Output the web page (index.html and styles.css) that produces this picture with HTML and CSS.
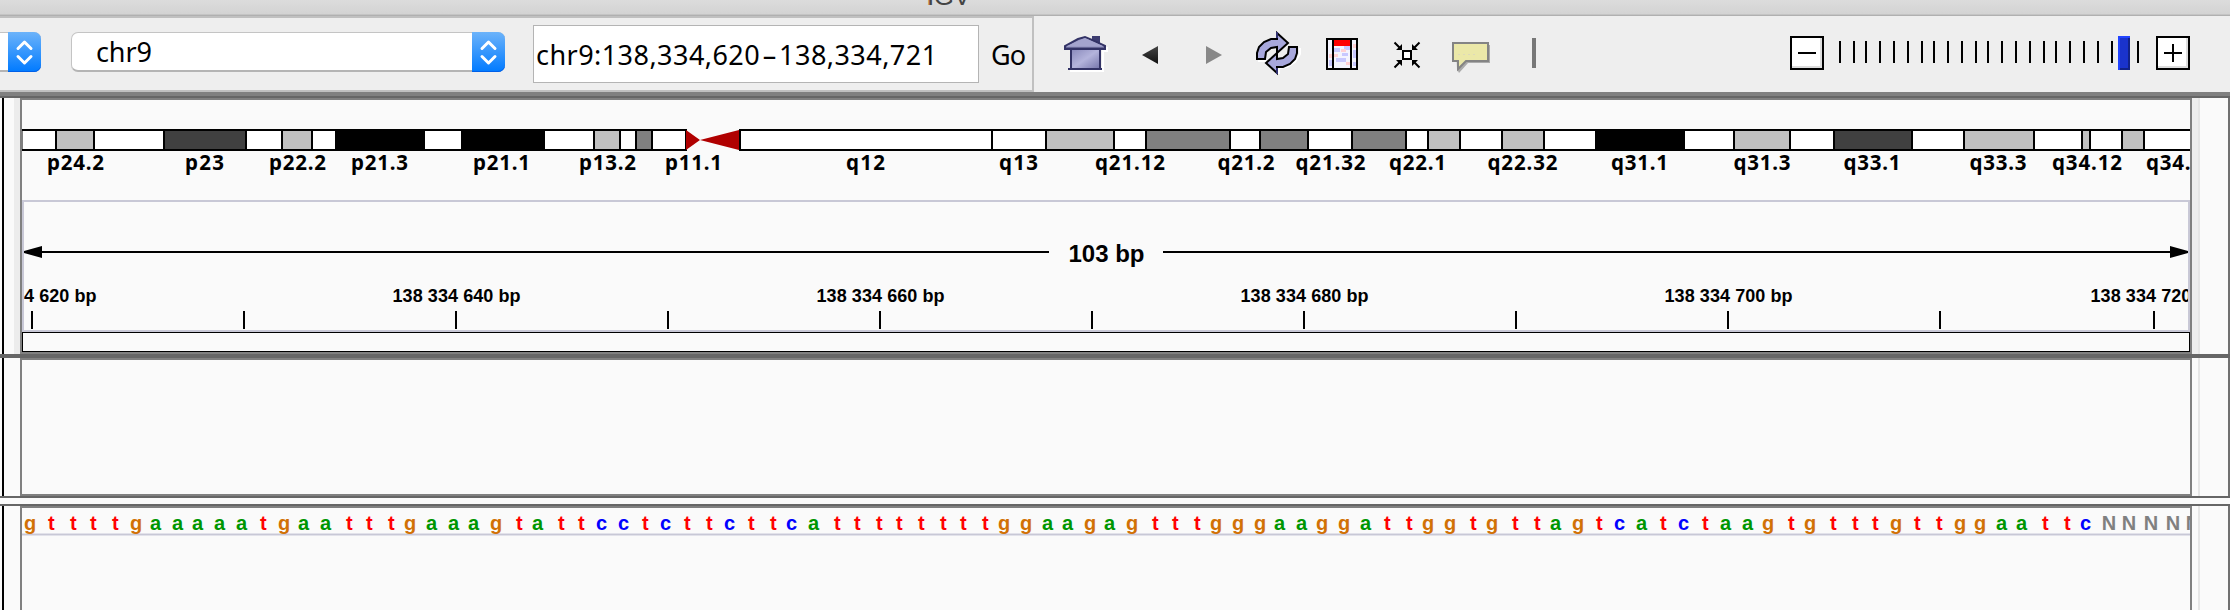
FILE: index.html
```html
<!DOCTYPE html>
<html lang="en">
<head>
<meta charset="utf-8">
<title>IGV</title>
<link rel="stylesheet" href="styles.css">
</head>
<body>
<div class="window">
  <header class="titlebar"><span class="title"><span class="title-initial">I</span>GV</span></header>
  <div class="toolbar">
    <div class="location">
      <div class="combo combo-genome"><span class="stepper"><svg width="33" height="40" viewBox="0 0 33 40"><path d="M10 16.5l6.500-6.500 6.500 6.500M10 24.500l6.500 6.500 6.500-6.500"/></svg></span></div>
      <div class="combo combo-chrom"><span class="combo-text">chr9</span><span class="stepper"><svg width="33" height="40" viewBox="0 0 33 40"><path d="M10 16.5l6.500-6.500 6.500 6.500M10 24.500l6.500 6.500 6.500-6.500"/></svg></span></div>
      <div class="locus"><span class="locus-text">chr9:138,334,620<span class="dash">–</span>138,334,721</span></div>
      <span class="go">Go</span>
    </div>
    <svg class="icons" width="520" height="76" viewBox="1034 16 520 76">
      <defs>
        <linearGradient id="wall" x1="0" y1="0" x2="1" y2="1"><stop offset="0" stop-color="#8888ba"/><stop offset=".5" stop-color="#b4b4dc"/><stop offset="1" stop-color="#7474aa"/></linearGradient>
        <linearGradient id="back" x1="0" y1="0" x2="0" y2="1"><stop offset="0" stop-color="#444"/><stop offset="1" stop-color="#111"/></linearGradient>
      </defs>
      <g>
        <path d="M1070 71h33v-20h4v-4" fill="none" stroke="#fff" stroke-width="2"/>
        <path d="M1092 36h8v9h-8z" fill="#3c3c70"/>
        <path d="M1071 49h29v20h-29z" fill="url(#wall)" stroke="#333366" stroke-width="2"/>
        <path d="M1068 69h34" stroke="#333366" stroke-width="2"/>
        <path d="M1065 49v-3l13-7 7-2 7 3 13 6v3z" fill="#9a9ac6" stroke="#333366" stroke-width="2"/>
        <path d="M1067 46l18-8 18 8z" fill="#a4a4ce"/>
        <path d="M1065 48.500h40" stroke="#333366" stroke-width="2"/>
      </g>
      <path d="M1142 55l16-9v18z" fill="url(#back)"/>
      <path d="M1222 55l-16-9v18z" fill="#888"/>
      <g stroke-width="2" fill="#a8a8dc">
        <path d="M1266 61h-8M1279 74v-6l8-1 8-5 5-8v-6" fill="none" stroke="#fff"/>
        <path d="M1257 59V53l2-6 5-5 7-3h6v-6l11 10-11 10v-6l-6 1-5 4-1 7z" stroke="#000"/>
        <path d="M1297 47v6l-2 6-5 5-7 3h-6v6l-11-10 11-10v6l6-1 5-4 1-7z" stroke="#000"/>
        <path d="M1277 32v6M1277 68v6" stroke="#303070" fill="none"/>
      </g>
      <g>
        <path d="M1327 39h30v30h-30z" fill="#f4f4ff"/>
        <path d="M1334 48h6v4h-6zM1344 46h6v4h-6zM1336 58h10v4h-10zM1353 50h3v8h-3zM1329 60h3v6h-3zM1342 53h6v3h-6zM1353 62h3v4h-3z" fill="#c8c8ff"/>
        <path d="M1334 54h4v3h-4zM1341 49h5v3h-5zM1329 54h3v4h-3zM1353 44h3v4h-3zM1346 62h4v3h-4z" fill="#ffd0d4"/>
        <path d="M1334 40h16v6h-16z" fill="#f00"/>
        <path d="M1327 39h30v30h-30zM1333 39v30M1351 39v30" fill="none" stroke="#000" stroke-width="2"/>
      </g>
      <g>
        <path d="M1403 51h8v8h-8z" fill="#fff" stroke="#000" stroke-width="2"/>
        <path d="M1394.500 42.500l6 6M1419.500 42.500l-6 6M1394.500 67.500l6-6M1419.500 67.500l-6-6" stroke="#000" stroke-width="2"/>
        <path d="M1402 50v-6l-6 6zM1412 50v-6l6 6zM1402 60v6l-6-6zM1412 60v6l6-6z"/>
      </g>
      <g>
        <path d="M1456 45h34v18h-22l-9 10-2-4z" fill="#aaa"/>
        <path d="M1453 43h35v18h-22l-8 8v-8h-5z" fill="#ebe8a8" stroke="#848484" stroke-width="2"/>
        <path d="M1458 54.500h20" stroke="#ddd9bb" stroke-dasharray="2 3"/>
      </g>
      <path d="M1532 38h4v30h-4z" fill="#777"/>
    </svg>
    <div class="zoom">
      <button class="zoom-btn" aria-label="Zoom out"><svg width="30" height="30"><path d="M6 15h18"/></svg></button>
      <svg class="slider" id="slider" width="332" height="34" viewBox="1824 36 332 34"></svg>
      <button class="zoom-btn" aria-label="Zoom in"><svg width="30" height="30"><path d="M6 15h18M15 6v18"/></svg></button>
    </div>
  </div>
  <main class="panels">
    <section class="row row-header">
      <div class="name-col"></div>
      <div class="view">
        <svg class="ideogram" id="ideogram" width="2168" height="100" viewBox="22 100 2168 100"></svg>
        <div class="ruler"><svg id="ruler" width="2164" height="128" viewBox="24 202 2164 128"></svg></div>
        <div class="overview"></div>
      </div>
      <div class="scroll-col"></div>
    </section>
    <section class="row row-data">
      <div class="name-col"></div><div class="view"></div><div class="scroll-col"></div>
    </section>
    <div class="divider"></div>
    <section class="row row-sequence">
      <div class="name-col"></div>
      <div class="view"><svg id="sequence" width="2168" height="102" viewBox="22 508 2168 102"></svg></div>
      <div class="scroll-col"></div>
    </section>
  </main>
</div>
<script src="main.js"></script>
</body>
</html>
```
FILE: styles.css
```css
* { box-sizing: border-box; }
body { margin: 0; background: #fafafa; font-family: "Noto Sans", "Open Sans", sans-serif; color: #000; overflow: hidden; }
svg { display: block; flex: none; }
.window { width: 2230px; height: 610px; display: flex; flex-direction: column; overflow: hidden; }
.titlebar { height: 16px; flex: none; overflow: hidden; background: linear-gradient(#dcdcdc, #d3d3d3 14px, #c4c4c4 14px, #c4c4c4 15px, #b0b0b0 15px); padding-left: 927px; }
.title { display: block; margin-top: -19px; font: 26px/30px "Liberation Sans", Arial, sans-serif; color: #444; letter-spacing: -.5px; }
.title-initial { text-shadow: -1px 0 #d08a50; }
.toolbar { height: 82px; flex: none; display: flex; background: linear-gradient(#eee 76px, #808080 76px, #808080 80px, #666 80px); }
.location { width: 1034px; height: 76px; flex: none; display: flex; align-items: flex-start; border: 2px solid #c0c0c0; border-left: 0; }
.combo { height: 40px; margin-top: 14px; display: flex; justify-content: space-between; background: #fff; border: 1px solid #c4c4c4; border-bottom: 2px solid #b4b4b4; border-radius: 7px; flex: none; }
.combo-genome { width: 41px; border-left: 0; border-top-left-radius: 0; border-bottom-left-radius: 0; justify-content: flex-end; }
.combo-chrom { width: 434px; margin-left: 30px; }
.combo-text { font-size: 27px; line-height: 38px; padding-left: 24px; letter-spacing: -.1px; }
.stepper { width: 33px; height: 40px; margin: -1px -1px 0 0; border-radius: 0 7px 7px 0; background: linear-gradient(#6cb3fa, #007aff); box-shadow: inset 0 -1px #0060e8; }
.stepper path { fill: none; stroke: #fff; stroke-width: 3; stroke-linecap: round; stroke-linejoin: round; }
.locus { width: 446px; height: 58px; margin: 7px 0 0 28px; background: #fff; border: 1px solid #b4b4b4; flex: none; }
.locus-text { display: block; padding-left: 2px; font-size: 27px; line-height: 58px; letter-spacing: .45px; white-space: nowrap; }
.dash { padding: 0 2.5px; }
.go { margin: 7px 0 0 12px; font-size: 27px; line-height: 60px; letter-spacing: -1px; }
.zoom { display: flex; margin: 20px 0 0 236px; }
.zoom-btn { width: 34px; height: 34px; padding: 0; border: 2px solid #000; background: #fff; box-shadow: inset -2px -2px #ddd; }
.zoom-btn path { stroke: #000; stroke-width: 2; }
.panels { flex: 1; display: flex; flex-direction: column; background: #fafafa; }
.row { display: flex; flex: none; }
.name-col { flex: none; border-left: 2px solid #000; margin-left: 2px; width: 18px; }
.view { width: 2172px; flex: none; border: 2px solid #808080; overflow: hidden; }
.scroll-col { flex: 1; border-right: 2px solid #707070; background: linear-gradient(90deg, #fafafa 6px, #e6e6e6 6px, #e6e6e6 8px, #fafafa 8px); }
.row-header { height: 260px; border-bottom: 4px solid #666; }
.row-header .name-col { background: linear-gradient(90deg, #fafafa 10px, #ececec 10px); }
.row-header .scroll-col { background: linear-gradient(90deg, #eee 6px, #e6e6e6 6px, #e6e6e6 8px, #fafafa 8px); }
.row-data { height: 140px; border-bottom: 2px solid #666; }
.divider { height: 8px; flex: none; border-bottom: 2px solid #666; }
.row-sequence { height: 104px; }
.row-sequence .view { border-bottom: 0; }
.ruler { height: 132px; border: 2px solid #c8c8d6; }
.overview { height: 20px; border: 1px solid #000; }
.band { font: bold 20.5px "Noto Sans", "Open Sans", sans-serif; }
.tick-label { font: bold 18px "Liberation Sans", Arial, sans-serif; text-anchor: middle; }
.span-label { font: bold 24px "Liberation Sans", Arial, sans-serif; text-anchor: middle; }
.base { font: bold 20px "Liberation Sans", Arial, sans-serif; text-anchor: middle; }
.base-a { fill: #009600; }
.base-c { fill: #00f; }
.base-g { fill: #d17105; }
.base-t { fill: #f00; }
.base-N { fill: #808080; }
```
FILE: main.js
```js
const NS = 'http://www.w3.org/2000/svg';
function add(parent, tag, attrs, text) {
  const el = document.createElementNS(NS, tag);
  for (const k in attrs) el.setAttribute(k, attrs[k]);
  if (text) el.textContent = text;
  parent.appendChild(el);
}
const rect = (p, x, y, width, height, fill) => add(p, 'rect', { x, y, width, height, fill });

// Zoom slider
const slider = document.getElementById('slider');
[1840,1854,1866,1880,1894,1908,1922,1934,1948,1962,1976,1988,2002,2016,2030,2044,2056,2070,2084,2098,2112,2138]
  .forEach(x => rect(slider, x - 1, 41, 2, 22, '#000'));
rect(slider, 2118, 36, 12, 34, '#1a33cc');
rect(slider, 2118, 36, 12, 2, '#2244ff');
rect(slider, 2118, 36, 2, 34, '#2244ff');
rect(slider, 2128, 38, 2, 32, '#112288');
rect(slider, 2120, 68, 10, 2, '#112288');

// Cytobands
const ideo = document.getElementById('ideogram');
rect(ideo, 22, 129, 665, 22, '#000');
rect(ideo, 22.5, 131, 662.5, 18, '#fff');
rect(ideo, 739, 129, 1451, 22, '#000');
rect(ideo, 741, 131, 1449, 18, '#fff');
[[56,94,'#c0c0c0'],[164,246,'#404040'],[282,312,'#c0c0c0'],[336,424,'#000'],[462,544,'#000'],[594,620,'#c0c0c0'],
 [636,652,'#808080'],[992,992,'#000'],[1046,1114,'#c0c0c0'],[1146,1230,'#808080'],[1260,1308,'#808080'],
 [1352,1406,'#808080'],[1428,1460,'#c0c0c0'],[1502,1544,'#c0c0c0'],[1596,1684,'#000'],[1734,1790,'#c0c0c0'],
 [1834,1912,'#404040'],[1964,2034,'#c0c0c0'],[2082,2090,'#c0c0c0'],[2122,2144,'#c0c0c0']]
  .forEach(([a, b, fill]) => {
    rect(ideo, a - 1, 131, b - a + 2, 18, '#000');
    if (b > a) rect(ideo, a + 1, 131, b - a - 2, 18, fill);
  });
add(ideo, 'path', { d: 'M686 130L700 140L686 150zM739 130L700 140L739 150z', fill: '#b00000' });
[['p24.2',48],['p23',186],['p22.2',270],['p21.3',352],['p21.1',474],['p13.2',580],['p11.1',666],['q12',847],['q13',1000],
 ['q21.12',1096],['q21.2',1218.5],['q21.32',1296.5],['q22.1',1390],['q22.32',1488.5],['q31.1',1612],['q31.3',1734.5],
 ['q33.1',1844.5],['q33.3',1970.5],['q34.12',2053],['q34.2',2147]]
  .forEach(([name, x]) => add(ideo, 'text', {
    class: 'band', x: x - 1, y: 170, textLength: { 3: 39, 5: 57, 6: 70 }[name.length]
  }, name));

// Ruler
const ruler = document.getElementById('ruler');
rect(ruler, 26, 251, 1023, 2, '#000');
rect(ruler, 1163, 251, 1023, 2, '#000');
add(ruler, 'path', { d: 'M24 251L42 246V258L24 253zM2188 251L2170 246V258L2188 253z' });
add(ruler, 'text', { class: 'span-label', x: 1106.5, y: 262 }, '103 bp');
for (let i = 0; i <= 10; i++) {
  const x = i === 10 ? 2154 : 32 + 212 * i;
  rect(ruler, x - 1, 311, 2, 18, '#000');
  if (i % 2 === 0) add(ruler, 'text', { class: 'tick-label', x: x + 0.5, y: 302, textLength: 128 }, '138 334 ' + (620 + 10 * i) + ' bp');
}

// Reference sequence
const seq = document.getElementById('sequence');
rect(seq, 22, 533, 2168, 3, '#e2e2ea');
rect(seq, 22, 534, 2168, 1, '#c8c8d6');
const bases = 'gttttgaaaaatgaatttgaaagtattcctcttcttcattttttttggaagagtttgggaaggattggtgttagtcatctaagtgtttgttggaattcNNNNN';
const offset = { a: 12.1, c: 12.1, g: 12.05, t: 14.1, N: 12.1 };
const half = { a: 5.5, c: 5.5, g: 6, t: 3.3, N: 7 };
[...bases].forEach((b, i) => {
  const start = 2 * Math.floor(10.605 * i + offset[b]);
  add(seq, 'text', { class: 'base base-' + b, x: start + half[b], y: 530 }, b);
});
```
